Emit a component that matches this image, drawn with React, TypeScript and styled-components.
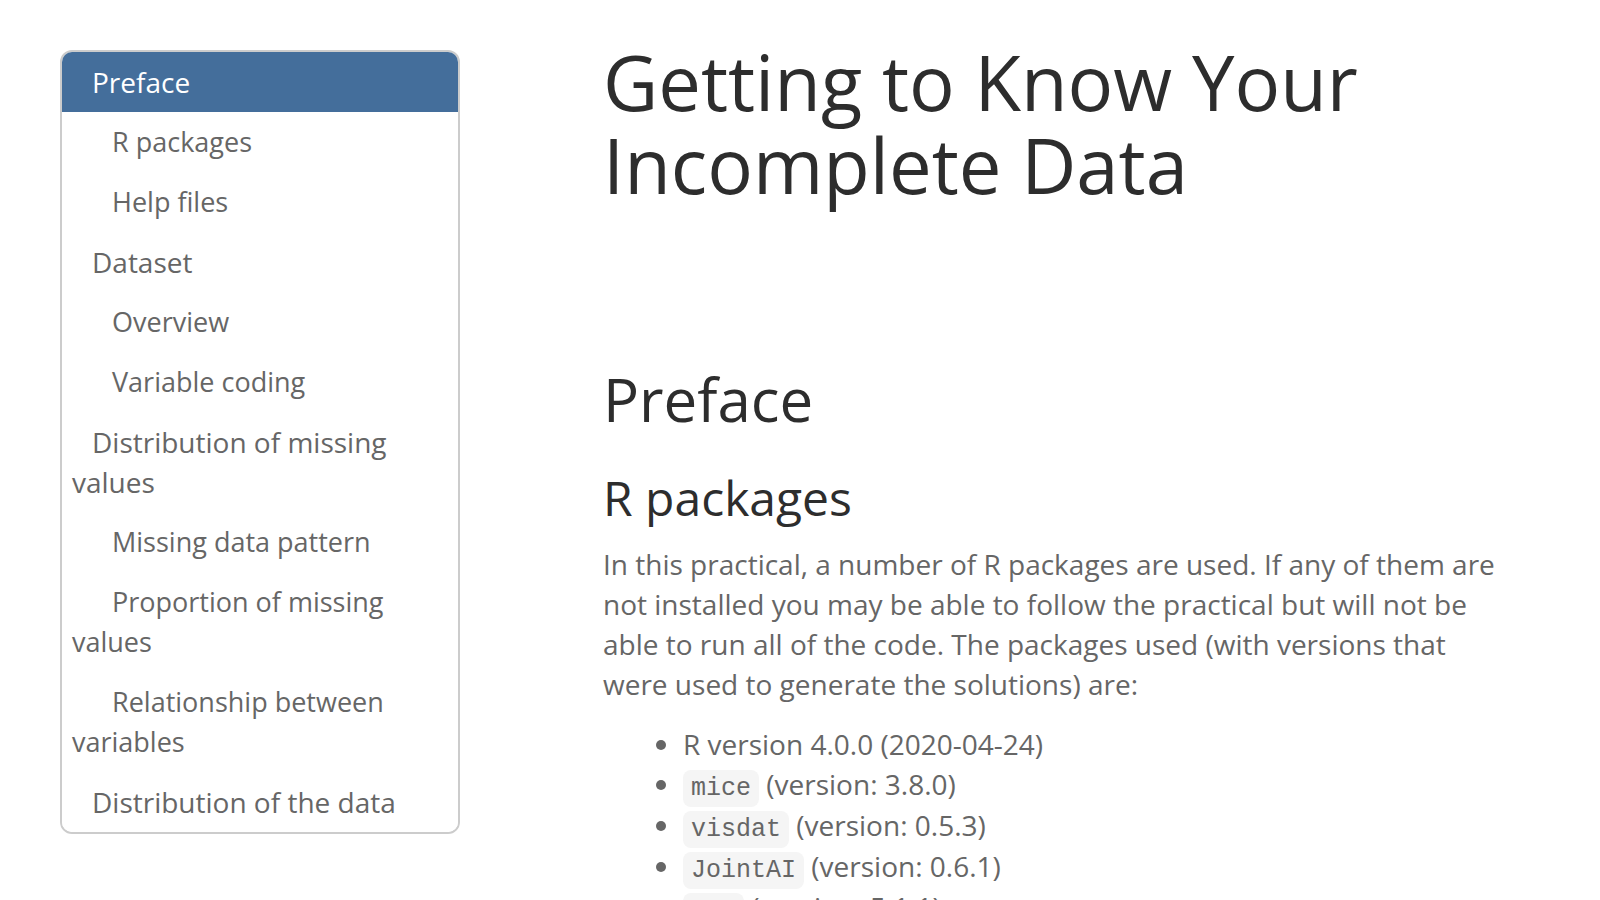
import React from "react";
import styled, { createGlobalStyle } from "styled-components";

const Global = createGlobalStyle`
  * { box-sizing: border-box; }
  body { margin: 0; background: #fff; color: #666; font: 28px/40px "Open Sans", sans-serif; }
`;
const Page = styled.div`
  display: grid;
  grid-template-columns: 400px minmax(0, 1fr);
  column-gap: 143px;
  align-items: start;
  padding: 40px 100px 0 60px;
  height: 100vh;
  overflow: hidden;
`;
const Toc = styled.nav`
  margin-top: 10px;
  border: 2px solid #ccc;
  border-radius: 12px;
  overflow: hidden;
`;
const TocLink = styled.a<{ $active?: boolean; $sub?: boolean }>`
  display: block;
  padding: 10px;
  text-decoration: none;
  font-size: ${(p) => (p.$sub ? 27 : 28)}px;
  text-indent: ${(p) => (p.$sub ? 40 : 20)}px;
  color: ${(p) => (p.$active ? "#fff" : "#666")};
  background: ${(p) => (p.$active ? "#446e9b" : "#fff")};
`;
const Title = styled.h1`
  margin: 0;
  color: #2d2d2d;
  font-size: 76px;
  line-height: 83px;
  font-weight: 400;
`;
const Heading = styled.h1`
  margin: 160px 0 0;
  color: #2d2d2d;
  font-size: 60px;
  line-height: 66px;
  font-weight: 400;
`;
const SubHeading = styled.h2`
  margin: 40px 0 20px;
  color: #2d2d2d;
  font-size: 48px;
  line-height: 52px;
  font-weight: 400;
`;
const Text = styled.p`
  margin: 0 0 20px;
`;
const List = styled.ul`
  margin: 0;
  padding-left: 80px;
`;
const PackageItem = styled.li`
  line-height: 41px;
`;
const Code = styled.code`
  padding: 4px 8px;
  border-radius: 8px;
  background: #f5f5f5;
  color: #666;
  font: 25px "Liberation Mono", monospace;
`;

const sections = [
  { label: "Preface", active: true },
  { label: "R packages", sub: true },
  { label: "Help files", sub: true },
  { label: "Dataset" },
  { label: "Overview", sub: true },
  { label: "Variable coding", sub: true },
  { label: "Distribution of missing values" },
  { label: "Missing data pattern", sub: true },
  { label: "Proportion of missing values", sub: true },
  { label: "Relationship between variables", sub: true },
  { label: "Distribution of the data" },
];
const packages = [
  ["mice", "3.8.0"],
  ["visdat", "0.5.3"],
  ["JointAI", "0.6.1"],
  ["VIM", "5.1.1"],
];

export default function App() {
  return (
    <Page>
      <Global />
      <Toc>
        {sections.map((s) => (
          <TocLink key={s.label} href="#" $active={s.active} $sub={s.sub}>{s.label}</TocLink>
        ))}
      </Toc>
      <main>
        <Title>Getting to Know Your Incomplete Data</Title>
        <Heading>Preface</Heading>
        <SubHeading>R packages</SubHeading>
        <Text>
          In this practical, a number of R packages are used. If any of them are not installed you may be able to
          follow the practical but will not be able to run all of the code. The packages used (with versions that were
          used to generate the solutions) are:
        </Text>
        <List>
          <li>R version 4.0.0 (2020-04-24)</li>
          {packages.map(([name, version]) => (
            <PackageItem key={name}><Code>{name}</Code> (version: {version})</PackageItem>
          ))}
        </List>
      </main>
    </Page>
  );
}
